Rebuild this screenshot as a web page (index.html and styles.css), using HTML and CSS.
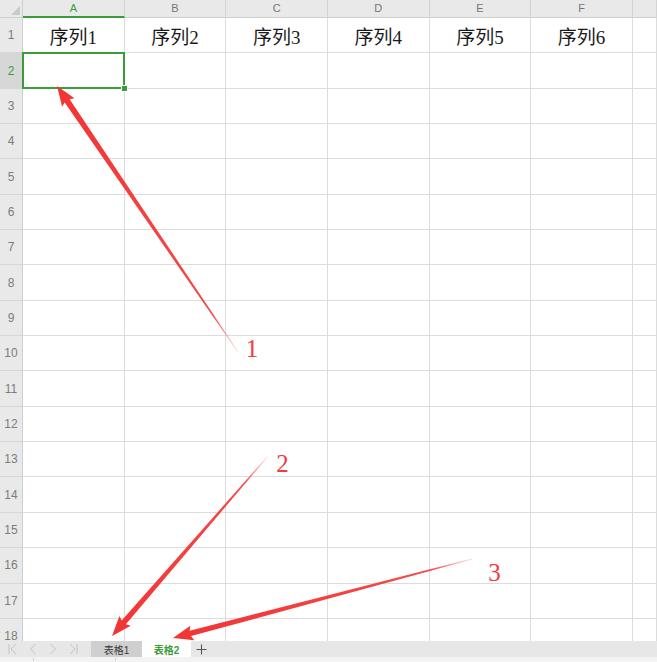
FILE: index.html
```html
<!DOCTYPE html>
<html lang="zh">
<head>
<meta charset="utf-8">
<title>表格</title>
<link rel="stylesheet" href="styles.css">
</head>
<body>
<div class="app">
  <div class="sheet">
    <div class="grid">
      <div class="corner"><span class="tri"></span></div>
      <div class="ch ch-sel">A</div>
      <div class="ch">B</div>
      <div class="ch">C</div>
      <div class="ch">D</div>
      <div class="ch">E</div>
      <div class="ch">F</div>
      <div class="ch"></div>

      <div class="rh">1</div>
      <div class="c t">序列1</div><div class="c t">序列2</div><div class="c t">序列3</div><div class="c t">序列4</div><div class="c t">序列5</div><div class="c t">序列6</div><div class="c"></div>

      <div class="rh rh-sel">2</div>
      <div class="c active"><span class="selbox"></span><span class="handle"></span></div><div class="c"></div><div class="c"></div><div class="c"></div><div class="c"></div><div class="c"></div><div class="c"></div>

      <div class="rh">3</div><div class="c"></div><div class="c"></div><div class="c"></div><div class="c"></div><div class="c"></div><div class="c"></div><div class="c"></div>
      <div class="rh">4</div><div class="c"></div><div class="c"></div><div class="c"></div><div class="c"></div><div class="c"></div><div class="c"></div><div class="c"></div>
      <div class="rh">5</div><div class="c"></div><div class="c"></div><div class="c"></div><div class="c"></div><div class="c"></div><div class="c"></div><div class="c"></div>
      <div class="rh">6</div><div class="c"></div><div class="c"></div><div class="c"></div><div class="c"></div><div class="c"></div><div class="c"></div><div class="c"></div>
      <div class="rh">7</div><div class="c"></div><div class="c"></div><div class="c"></div><div class="c"></div><div class="c"></div><div class="c"></div><div class="c"></div>
      <div class="rh">8</div><div class="c"></div><div class="c"></div><div class="c"></div><div class="c"></div><div class="c"></div><div class="c"></div><div class="c"></div>
      <div class="rh">9</div><div class="c"></div><div class="c"></div><div class="c"></div><div class="c"></div><div class="c"></div><div class="c"></div><div class="c"></div>
      <div class="rh">10</div><div class="c"></div><div class="c"></div><div class="c"></div><div class="c"></div><div class="c"></div><div class="c"></div><div class="c"></div>
      <div class="rh">11</div><div class="c"></div><div class="c"></div><div class="c"></div><div class="c"></div><div class="c"></div><div class="c"></div><div class="c"></div>
      <div class="rh">12</div><div class="c"></div><div class="c"></div><div class="c"></div><div class="c"></div><div class="c"></div><div class="c"></div><div class="c"></div>
      <div class="rh">13</div><div class="c"></div><div class="c"></div><div class="c"></div><div class="c"></div><div class="c"></div><div class="c"></div><div class="c"></div>
      <div class="rh">14</div><div class="c"></div><div class="c"></div><div class="c"></div><div class="c"></div><div class="c"></div><div class="c"></div><div class="c"></div>
      <div class="rh">15</div><div class="c"></div><div class="c"></div><div class="c"></div><div class="c"></div><div class="c"></div><div class="c"></div><div class="c"></div>
      <div class="rh">16</div><div class="c"></div><div class="c"></div><div class="c"></div><div class="c"></div><div class="c"></div><div class="c"></div><div class="c"></div>
      <div class="rh">17</div><div class="c"></div><div class="c"></div><div class="c"></div><div class="c"></div><div class="c"></div><div class="c"></div><div class="c"></div>
      <div class="rh">18</div><div class="c"></div><div class="c"></div><div class="c"></div><div class="c"></div><div class="c"></div><div class="c"></div><div class="c"></div>
    </div>
  </div>

  <div class="tabbar">
    <div class="nav">
      <svg class="navicon" viewBox="-10 -10 20 20"><path d="M-4 -5V5M3 -5L-2 0L3 5"/></svg>
      <svg class="navicon" viewBox="-10 -10 20 20"><path d="M2.5 -5L-2.5 0L2.5 5"/></svg>
      <svg class="navicon" viewBox="-10 -10 20 20"><path d="M-2.5 -5L2.5 0L-2.5 5"/></svg>
      <svg class="navicon" viewBox="-10 -10 20 20"><path d="M4 -5V5M-3 -5L2 0L-3 5"/></svg>
    </div>
    <div class="tab">表格1</div>
    <div class="tab tab-on">表格2</div>
    <div class="add"><svg viewBox="0 0 12 12" class="plus"><path d="M6 0.5V11.5M0.5 6H11.5"/></svg></div>
  </div>
  <div class="status"><span class="tick t1"></span><span class="tick t2"></span></div>

  <svg class="overlay" width="657" height="662" viewBox="0 0 657 662">
    <defs>
      <linearGradient id="fade" x1="0" y1="0" x2="1" y2="0">
        <stop offset="0" stop-color="#ff7a7a" stop-opacity="0.25"/>
        <stop offset="0.14" stop-color="#f44040" stop-opacity="0.95"/>
        <stop offset="1" stop-color="#f23434" stop-opacity="1"/>
      </linearGradient>
    </defs>
    <polygon fill="url(#fade)" transform="translate(238 352) rotate(-124.23)" points="0,-0.4 303.7,-3 301.7,-7.5 321.7,0 301.7,7.5 303.7,3 0,0.4"/>
    <polygon fill="url(#fade)" transform="translate(268 456) rotate(130.91)" points="0,-0.4 220.2,-2.8 218.2,-7.5 238.2,0 218.2,7.5 220.2,2.8 0,0.4"/>
    <polygon fill="url(#fade)" transform="translate(472 559) rotate(165.2)" points="0,-0.4 291.3,-2.8 289.3,-7.5 309.3,0 289.3,7.5 291.3,2.8 0,0.4"/>
    <text class="num" x="252" y="357">1</text>
    <text class="num" x="282.5" y="472">2</text>
    <text class="num" x="494.5" y="581">3</text>
  </svg>
</div>
</body>
</html>
```

FILE: styles.css
```css
* { box-sizing: border-box; }
html, body { margin: 0; padding: 0; background: #ffffff; }
body { font-family: "Liberation Sans", "Noto Sans CJK SC", sans-serif; }

.app {
  position: relative;
  width: 657px;
  height: 662px;
  overflow: hidden;
  display: flex;
  flex-direction: column;
}

.sheet {
  height: 641px;
  overflow: hidden;
  flex: none;
}

.grid {
  display: grid;
  grid-template-columns: 23px repeat(6, 101.67px) 1fr;
  grid-template-rows: 18px repeat(18, 35.35px);
}

.corner {
  position: relative;
  background: #e9e9e9;
  border-right: 1px solid #cfcfcf;
  border-bottom: 1px solid #cfcfcf;
}
.tri {
  position: absolute;
  right: 2px;
  bottom: 2px;
  width: 0;
  height: 0;
  border-left: 9px solid transparent;
  border-bottom: 9px solid #c9c9c9;
}

.ch {
  background: #e9e9e9;
  border-right: 1px solid #d4d4d4;
  border-bottom: 1px solid #cfcfcf;
  color: #767676;
  font-size: 11px;
  display: flex;
  align-items: center;
  justify-content: center;
  padding-bottom: 1px;
}
.ch-sel {
  color: #3a9d3a;
  border-bottom: 2px solid #3a9d3a;
  padding-bottom: 0;
}

.rh {
  background: #e9e9e9;
  border-right: 1px solid #cfcfcf;
  border-bottom: 1px solid #d6d6d6;
  color: #7c7c7c;
  font-size: 12px;
  display: flex;
  align-items: center;
  justify-content: center;
}
.rh-sel {
  background: #d7d7d7;
  color: #3a9d3a;
}

.c {
  border-right: 1px solid #dcdcdc;
  border-bottom: 1px solid #dcdcdc;
  background: #ffffff;
}
.t {
  display: flex;
  align-items: center;
  justify-content: center;
  font-family: "Liberation Serif", "Noto Sans CJK SC", serif;
  font-size: 19px;
  color: #1a1a1a;
}

.active { position: relative; }
.selbox {
  position: absolute;
  left: -1px;
  top: -1px;
  right: -1px;
  bottom: -1px;
  border: 2px solid #3a9d3a;
}
.handle {
  position: absolute;
  right: -3px;
  bottom: -3px;
  width: 5px;
  height: 5px;
  background: #3a9d3a;
  outline: 1px solid #ffffff;
}

.tabbar {
  height: 16px;
  flex: none;
  background: #e7e7e7;
  display: flex;
  align-items: stretch;
}
.nav {
  width: 91px;
  padding-left: 3px;
  display: flex;
  align-items: center;
}
.navicon {
  width: 20px;
  height: 20px;
  fill: none;
  stroke: #c3c3c3;
  stroke-width: 1;
}
.tab {
  display: flex;
  align-items: center;
  justify-content: center;
  font-size: 10px;
  color: #3a3a3a;
  background: #cfcfcf;
  width: 51px;
  padding-top: 1px;
}
.tab-on {
  background: #ffffff;
  color: #3a9d3a;
  font-weight: bold;
  width: 49px;
}
.add {
  width: 20px;
  display: flex;
  align-items: center;
  justify-content: center;
}
.plus {
  width: 11px;
  height: 11px;
  fill: none;
  stroke: #555555;
  stroke-width: 1.2;
}

.status {
  flex: 1;
  background: #f3f3f3;
  position: relative;
}
.tick {
  position: absolute;
  top: 1px;
  width: 1px;
  height: 3px;
  background: #d0d0d0;
}
.t1 { left: 33px; }
.t2 { left: 115px; }

.overlay {
  position: absolute;
  left: 0;
  top: 0;
  pointer-events: none;
}
.num {
  font-family: "Liberation Serif", serif;
  font-size: 25px;
  fill: #f23c3c;
  text-anchor: middle;
}
```
